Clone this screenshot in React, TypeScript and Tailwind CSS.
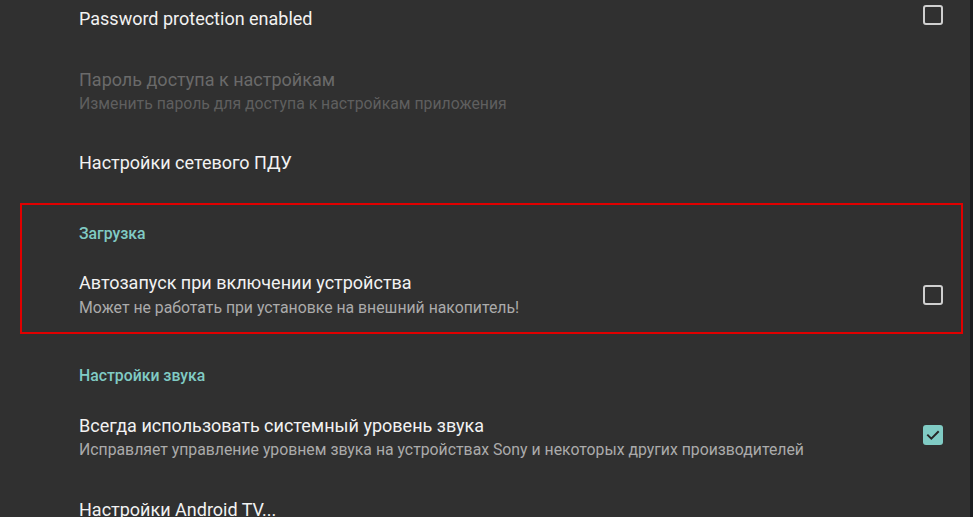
import React from "react";

const font = { fontFamily: "Roboto, 'Noto Sans', sans-serif" };

function Unchecked() {
  return <div className="w-[20px] h-[20px] rounded-[3px] border-2 border-[#cfcfcf] shrink-0" />;
}

function Checked() {
  return (
    <div className="w-[20px] h-[20px] rounded-[3px] bg-[#80cbc4] shrink-0 flex items-center justify-center">
      <svg width="16" height="16" viewBox="0 0 24 24" fill="none">
        <path d="M4.5 12.5l5 5L19.5 7.5" stroke="#262626" strokeWidth="3" strokeLinecap="square" />
      </svg>
    </div>
  );
}

export default function App() {
  return (
    <div className="w-[973px] h-[517px] bg-[#303030] flex overflow-hidden" style={font}>
      <div className="flex-1 flex flex-col pt-[7px]">
        {/* Row 1 */}
        <div className="h-[36px] flex items-center justify-between pl-[79px] pr-[27px]">
          <span className="text-[18px] leading-[24px] text-[#f2f2f2]">Password protection enabled</span>
          <div className="-mt-[8px]">
            <Unchecked />
          </div>
        </div>
        {/* Row 2 (disabled) */}
        <div className="mt-[37px] pl-[79px] flex flex-col">
          <span className="text-[18px] leading-[24px] text-[#6a6a6a]">Пароль доступа к настройкам</span>
          <span className="text-[15.8px] leading-[22px] text-[#5f5f5f] mt-[1px]">Изменить пароль для доступа к настройкам приложения</span>
        </div>
        {/* Row 3 */}
        <div className="mt-[36px] pl-[79px]">
          <span className="text-[18px] leading-[24px] text-[#f2f2f2]">Настройки сетевого ПДУ</span>
        </div>
        <div className="mt-[16px] h-px bg-[#484848]" />
        {/* Highlighted section */}
        <div className="mt-[11px] ml-[20px] w-[943px] border-2 border-[#e00000] pl-[57px] pr-[18px] pt-[19px] pb-[13px] flex flex-col">
          <span className="text-[15.8px] leading-[20px] font-medium text-[#80cbc4]">Загрузка</span>
          <div className="mt-[27px] flex items-center justify-between">
            <div className="flex flex-col">
              <span className="text-[18px] leading-[24px] text-[#f2f2f2]">Автозапуск при включении устройства</span>
              <span className="text-[15.8px] leading-[22px] text-[#ababab] mt-[2px]">Может не работать при установке на внешний накопитель!</span>
            </div>
            <Unchecked />
          </div>
        </div>
        <div className="mt-[2px] h-px bg-[#484848]" />
        {/* Sound section */}
        <div className="mt-[28px] pl-[79px]">
          <span className="text-[15.8px] leading-[20px] font-medium text-[#80cbc4]">Настройки звука</span>
        </div>
        <div className="mt-[26px] pl-[79px] pr-[27px] flex items-center justify-between">
          <div className="flex flex-col">
            <span className="text-[18px] leading-[24px] text-[#f2f2f2]">Всегда использовать системный уровень звука</span>
            <span className="text-[15.8px] leading-[24px] text-[#ababab]">Исправляет управление уровнем звука на устройствах Sony и некоторых других производителей</span>
          </div>
          <div className="-mt-[6px]">
            <Checked />
          </div>
        </div>
        <div className="mt-[36px] pl-[79px]">
          <span className="text-[18px] leading-[24px] text-[#f2f2f2]">Настройки Android TV...</span>
        </div>
      </div>
      <div className="w-[3px] bg-[#1b1e21]" />
    </div>
  );
}
